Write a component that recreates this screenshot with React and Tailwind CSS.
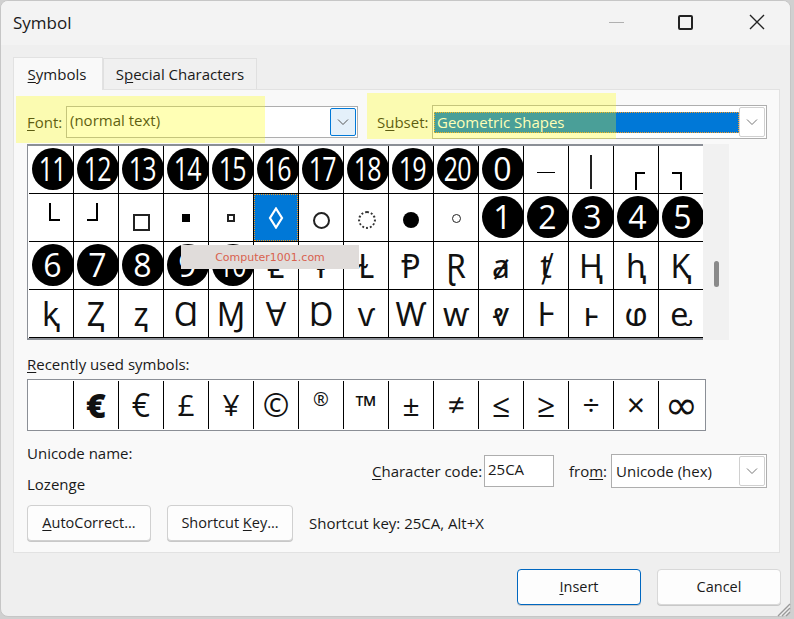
const U = ({ children }) => <span className="underline underline-offset-2 decoration-1">{children}</span>;

const Chevron = ({ color = "#555" }) => (
  <svg width="12" height="8" viewBox="0 0 12 8" fill="none"><path d="M1 1.5 L6 6.5 L11 1.5" stroke={color} strokeWidth="1" /></svg>
);

const Circle = ({ t }) => (
  <div className="w-[42px] h-[42px] ml-[3px] -mt-[1px] rounded-full bg-black text-white flex items-center justify-center text-[32px] leading-none font-['Open_Sans',sans-serif] shrink-0">
    <span className={t.length > 1 ? "block scale-x-[0.78] tracking-[-1px] whitespace-nowrap" : "block"}>{t}</span>
  </div>
);

const Box = ({ cls }) => <div className={cls}></div>;

const rows = [
  [["c", "11"], ["c", "12"], ["c", "13"], ["c", "14"], ["c", "15"], ["c", "16"], ["c", "17"], ["c", "18"], ["c", "19"], ["c", "20"], ["c", "0"],
   ["b", "w-[18px] h-[1px] bg-black mt-[5px]"], ["b", "w-[2px] h-[34px] bg-[#222] mt-[5px]"], ["b", "w-[10px] h-[18px] border-l-2 border-t-2 border-black ml-[7px] mt-[22px]"], ["b", "w-[10px] h-[18px] border-r-2 border-t-2 border-black -ml-[8px] mt-[22px]"]],
  [["b", "w-[11px] h-[18px] border-l-2 border-b-2 border-black ml-[7px] -mt-[11px]"], ["b", "w-[11px] h-[18px] border-r-2 border-b-2 border-black -ml-[8px] -mt-[11px]"], ["b", "w-[17px] h-[17px] border-2 border-[#222] mt-[9px]"], ["b", "w-[8px] h-[8px] bg-black mt-[1px]"], ["b", "w-[8px] h-[8px] border-2 border-[#222] mt-[1px]"],
   ["sel", "◊"], ["b", "w-[17px] h-[17px] rounded-full border-2 border-[#222] mt-[6px]"], ["b", "w-[18px] h-[18px] rounded-full border-2 border-dotted border-[#333] ml-[2px] mt-[4px]"], ["b", "w-[16px] h-[16px] rounded-full bg-black mt-[4px]"], ["b", "w-[9px] h-[9px] rounded-full border border-[#222] mt-[1px]"],
   ["c", "1"], ["c", "2"], ["c", "3"], ["c", "4"], ["c", "5"]],
  [["c", "6"], ["c", "7"], ["c", "8"], ["c", "9"], ["c", "10"], ["g", "Ⱡ"], ["g", "ⱡ"], ["g", "Ɫ"], ["g", "Ᵽ"], ["g", "Ɽ"], ["g", "ⱥ"], ["g", "ⱦ"], ["g", "Ⱨ"], ["g", "ⱨ"], ["g", "Ⱪ"]],
  [["g", "ⱪ"], ["g", "Ⱬ"], ["g", "ⱬ"], ["g", "Ɑ"], ["g", "Ɱ"], ["g", "Ɐ"], ["g", "Ɒ"], ["g", "ⱱ"], ["g", "Ⱳ"], ["g", "ⱳ"], ["g", "ⱴ"], ["g", "Ⱶ"], ["g", "ⱶ"], ["g", "ⱷ"], ["g", "ⱸ"]],
];

const Cell = ({ kind, v }) => {
  if (kind === "sel") {
    return (
      <div className="w-[45px] h-[48px] shrink-0 border-r border-b border-black flex items-center justify-center">
        <div className="w-[44px] h-[47px] bg-[#0078d7] border border-dotted border-[#f59a23] flex items-center justify-center">
          <svg width="16" height="22" viewBox="0 0 16 22" fill="none"><path d="M8 1.5 L14 11 L8 20.5 L2 11 Z" stroke="#fff" strokeWidth="2.2" /></svg>
        </div>
      </div>
    );
  }
  return (
    <div className="w-[45px] h-[48px] shrink-0 border-r border-b border-black flex items-center justify-center overflow-visible">
      {kind === "c" && <Circle t={v} />}
      {kind === "b" && <Box cls={v} />}
      {kind === "g" && <span className="text-[32px] leading-none text-[#111] font-['Noto_Sans','DejaVu_Sans',sans-serif]">{v}</span>}
    </div>
  );
};

const recent = [
  ["", ""], ["€", "font-black text-[34px]"], ["€", "text-[32px]"], ["£", "text-[30px]"], ["¥", "text-[30px]"], ["©", "text-[32px]"], ["®", "text-[19px] -mt-[12px]"], ["™", "text-[28px]"],
  ["±", "text-[30px]"], ["≠", "text-[30px]"], ["≤", "text-[32px]"], ["≥", "text-[32px]"], ["÷", "text-[30px]"], ["×", "text-[32px]"], ["∞", "text-[40px] font-['DejaVu_Sans',sans-serif]"],
];

const Btn = ({ children, cls }) => (
  <div className={"h-[36px] w-[124px] pt-[1px] rounded-[4px] bg-[#fdfdfd] flex items-center justify-center text-[14.5px] border shadow-[0_1px_0_#c8c8c8] " + cls}>{children}</div>
);

export default function App() {
  return (
    <div className="relative w-[794px] h-[619px] bg-[#d0d0d0] overflow-hidden font-['Open_Sans',sans-serif] text-[#1a1a1a] text-[14.5px] leading-none">
      <div className="w-[791px] h-[617px] rounded-[8px] bg-[#efefef] border border-[#c6c6c6] overflow-hidden flex flex-col">
        <div className="h-[44px] bg-[#f3f3f3] flex items-center shrink-0">
          <span className="ml-[12px] text-[17px] -mt-[1px]">Symbol</span>
          <div className="ml-auto flex items-center">
            <div className="w-[15px] h-[1px] bg-[#b0b0b0] -mt-[2px]"></div>
            <div className="ml-[54px] w-[15px] h-[15px] border-2 border-[#222] rounded-[2px] -mt-[2px]"></div>
            <svg className="ml-[56px] mr-[25px] -mt-[2px]" width="16" height="16" viewBox="0 0 16 16" fill="none"><path d="M1 1 L15 15 M15 1 L1 15" stroke="#222" strokeWidth="1.4" /></svg>
          </div>
        </div>

        <div className="flex items-end ml-[12px] mt-[12px] h-[32px] shrink-0">
          <div className="relative z-10 w-[90px] h-[33px] -mb-[1px] pr-[2px] bg-[#f9f9f9] border border-b-0 border-[#e2e2e2] flex items-center justify-center text-[15px]"><span><U>S</U>ymbols</span></div>
          <div className="w-[154px] h-[31px] bg-[#f0f0f0] border border-b-0 border-[#e0e0e0] flex items-center justify-center text-[15px]"><span>S<U>p</U>ecial Characters</span></div>
        </div>

        <div className="w-[767px] h-[464px] ml-[12px] bg-[#f9f9f9] border border-[#e2e2e2] shrink-0 flex flex-col">
          <div className="flex items-center mt-[15px] ml-[13px] h-[34px]">
            <div className="w-[39px] text-[15px]"><U>F</U>ont:</div>
            <div className="w-[292px] h-[32px] bg-white border border-[#aeaeae] flex items-center pl-[3px] pr-[1px]">
              <span className="text-[15px] -mt-[4px]">(normal text)</span>
              <div className="ml-auto w-[26px] h-[28px] bg-[#e4f0fa] border border-[#0078d7] rounded-[2px] flex items-center justify-center"><Chevron /></div>
            </div>
            <div className="ml-[19px] w-[55px] text-[15px]">S<U>u</U>bset:</div>
            <div className="w-[335px] h-[34px] bg-white border border-[#aeaeae] flex items-center pl-[1px] pr-[1px]">
              <div className="flex-1 h-[21px] bg-[#0078d7] border border-dotted border-[#f59a23] flex items-center pl-[2px] text-white text-[15px]">Geometric Shapes</div>
              <div className="w-[26px] h-[30px] bg-white border border-[#d0d0d0] rounded-[2px] flex items-center justify-center"><Chevron color="#777" /></div>
            </div>
          </div>

          <div className="flex ml-[13px] mt-[5px] h-[196px]">
            <div className="w-[676px] h-[196px] overflow-hidden bg-white border-l border-t-2 border-[#8b8f96] pl-[1px] shadow-[inset_0_-2px_0_#8b8f96]">
              {rows.map((r, i) => (
                <div key={i} className="flex">
                  {r.map(([k, v], j) => <Cell key={j} kind={k} v={v} />)}
                </div>
              ))}
            </div>
            <div className="w-[26px] h-[196px] bg-[#f1f1f1] flex justify-center pt-[117px]">
              <div className="w-[5px] h-[26px] rounded-full bg-[#8a8a8a]"></div>
            </div>
          </div>

          <div className="ml-[13px] mt-[15px] text-[15px] leading-[18px]"><U>R</U>ecently used symbols:</div>

          <div className="ml-[13px] mt-[6px] w-[679px] h-[52px] bg-white border border-[#8b8f96] flex items-center pl-[1px]">
            {recent.map(([g, c], i) => (
              <div key={i} className={"w-[45px] h-[48px] shrink-0 flex items-center justify-center font-['Open_Sans',sans-serif] " + (i < 14 ? "border-r border-black" : "")}>
                <span className={"leading-none text-[#111] " + c}>{g}</span>
              </div>
            ))}
          </div>

          <div className="flex mt-[14px] ml-[13px] h-[55px]">
            <div className="w-[340px] flex flex-col text-[15px]">
              <div className="mt-[1px]">Unicode name:</div>
              <div className="mt-[16px]">Lozenge</div>
            </div>
            <div className="flex items-center h-[34px] mt-[9px] ml-[5px] text-[15px]">
              <span className="w-[112px]"><U>C</U>haracter code:</span>
              <div className="w-[70px] h-[32px] bg-white border border-[#aeaeae] pl-[3px] pt-[6px]">25CA</div>
              <span className="ml-[15px] w-[42px]">fro<U>m</U>:</span>
              <div className="w-[156px] h-[34px] bg-white border border-[#aeaeae] flex items-center pl-[4px] pr-[1px]">
                <span>Unicode (hex)</span>
                <div className="ml-auto w-[26px] h-[30px] bg-white border border-[#d0d0d0] rounded-[2px] flex items-center justify-center"><Chevron color="#777" /></div>
              </div>
            </div>
          </div>

          <div className="flex items-center ml-[13px] mt-[5px]">
            <Btn cls="border-[#d0d0d0]"><span><U>A</U>utoCorrect...</span></Btn>
            <Btn cls="ml-[16px] w-[126px] border-[#d0d0d0]"><span>Shortcut <U>K</U>ey...</span></Btn>
            <span className="ml-[16px] mt-[1px] text-[15px]">Shortcut key: 25CA, Alt+X</span>
          </div>
        </div>

        <div className="flex justify-end mt-[16px] mr-[9px] gap-[16px]">
          <Btn cls="border-[#0067c0]"><span><U>I</U>nsert</span></Btn>
          <Btn cls="border-[#d8d8d8]"><span>Cancel</span></Btn>
        </div>
      </div>

      <div className="absolute left-[181px] top-[245px] w-[178px] h-[24px] bg-[#e0dcda] flex items-center justify-center text-[#d9624f] text-[11px] font-['DejaVu_Sans',sans-serif]">Computer1001.com</div>
      <div className="absolute left-[16px] top-[96px] w-[249px] h-[47px] bg-[rgba(255,255,0,0.29)] pointer-events-none"></div>
      <div className="absolute left-[367px] top-[93px] w-[249px] h-[46px] bg-[rgba(255,255,0,0.29)] pointer-events-none"></div>
      <svg className="absolute left-[776px] top-[602px]" width="15" height="15" viewBox="0 0 15 15" fill="none"><path d="M14 2 L2 14 M14 6 L6 14 M14 10 L10 14" stroke="#9a9a9a" strokeWidth="1.4" /></svg>
    </div>
  );
}
